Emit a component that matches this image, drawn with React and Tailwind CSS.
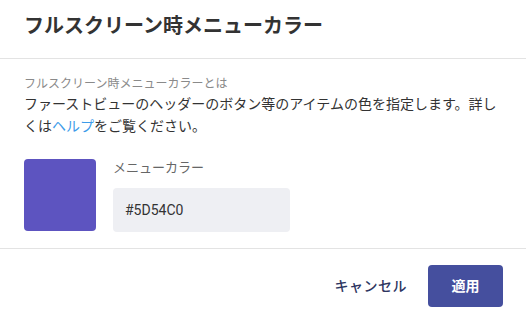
import { useState } from "react";

export default function App() {
  const [color, setColor] = useState("#5D54C0");

  return (
    <div
      className="w-[526px] h-[322px] bg-white text-[#333] overflow-hidden"
      style={{ fontFamily: "Roboto, 'Noto Sans CJK JP', sans-serif" }}
    >
      {/* ヘッダー */}
      <div className="px-6 pt-3 pb-[18px] border-b border-[#e3e3e3]">
        <h1 className="text-[20px] leading-[28px] font-bold text-[#333]">
          フルスクリーン時メニューカラー
        </h1>
      </div>

      {/* 本文 */}
      <div className="px-6 pt-4 pb-4 border-b border-[#e3e3e3]">
        <p className="text-[12px] leading-[18px] text-[#8a8a8a]">フルスクリーン時メニューカラーとは</p>
        <p className="text-[14px] leading-[22px] text-[#333]">
          ファーストビューのヘッダーのボタン等のアイテムの色を指定します。詳しくは
          <a href="#" className="text-[#3d9be9]">ヘルプ</a>
          をご覧ください。
        </p>

        <div className="flex items-start gap-[17px] mt-[22px]">
          <div className="w-[72px] h-[72px] rounded bg-[#5D54C0] shrink-0" />
          <div className="flex flex-col">
            <label className="text-[13px] leading-[18px] text-[#666]">メニューカラー</label>
            <input
              value={color}
              onChange={(e) => setColor(e.target.value)}
              className="mt-[11px] w-[177px] h-[44px] rounded bg-[#eeeff3] px-3 text-[14px] text-[#333] outline-none"
            />
          </div>
        </div>
      </div>

      {/* フッター */}
      <div className="flex items-center justify-end gap-[21px] pt-[16px] pr-[23px]">
        <button className="text-[14px] font-medium tracking-[0.5px] text-[#2d3561]">キャンセル</button>
        <button className="w-[75px] h-[42px] rounded bg-[#454f9e] text-white text-[14px] font-bold">
          適用
        </button>
      </div>
    </div>
  );
}
